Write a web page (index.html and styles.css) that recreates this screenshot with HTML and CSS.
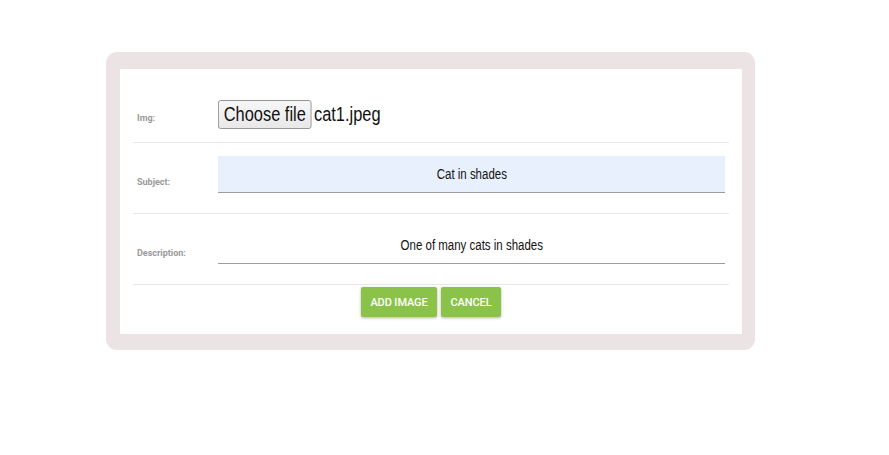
FILE: index.html
```html
<!DOCTYPE html>
<html>
<head>
<meta charset="utf-8">
<link rel="stylesheet" href="styles.css">
</head>
<body>
<div class="frame">
  <form class="card">
    <div class="row row-file">
      <label class="label">Img:</label>
      <div class="control">
        <div class="file-control">
          <button type="button" class="file-btn">Choose file</button>
          <span class="file-name">cat1.jpeg</span>
        </div>
      </div>
    </div>
    <div class="row">
      <label class="label">Subject:</label>
      <div class="control">
        <div class="input filled"><span class="narrow">Cat in shades</span></div>
      </div>
    </div>
    <div class="row">
      <label class="label">Description:</label>
      <div class="control">
        <div class="input"><span class="narrow">One of many cats in shades</span></div>
      </div>
    </div>
    <div class="actions">
      <button type="button" class="btn btn-add">Add image</button>
      <button type="button" class="btn btn-cancel">Cancel</button>
    </div>
  </form>
</div>
</body>
</html>
```
FILE: styles.css
```css
html, body {
  margin: 0;
  padding: 0;
  background: #ffffff;
}
body {
  font-family: "Liberation Sans", Arial, sans-serif;
}
.frame {
  box-sizing: border-box;
  width: 649px;
  margin: 52px 0 0 106px;
  padding: 17px 13px 16px 14px;
  background: #ece4e4;
  border-radius: 11px;
}
.card {
  display: block;
  background: #ffffff;
  padding: 0 13px 17px;
}
.row {
  display: flex;
  align-items: flex-start;
  padding: 13px 4px 20px;
  border-bottom: 1px solid #e8e8e8;
}
.row-file {
  padding: 31px 4px 13px;
}
.label {
  flex: 0 0 81px;
  font-family: Roboto, "Liberation Sans", sans-serif;
  font-weight: 700;
  font-size: 9px;
  line-height: 11px;
  color: #9a9a9a;
  margin-top: 21px;
}
.row-file .label {
  margin-top: 13px;
}
.control {
  flex: 1;
}
.file-control {
  display: flex;
  align-items: center;
  height: 29px;
  transform: scaleX(0.82);
  transform-origin: left center;
}
.file-btn {
  box-sizing: border-box;
  height: 29px;
  padding: 0 6px;
  font-family: "Liberation Sans", sans-serif;
  font-size: 20px;
  color: #111;
  background: linear-gradient(#f7f7f7, #e8e8e8);
  border: 1px solid #8c8c8c;
  border-radius: 3px;
  margin-right: 3px;
}
.file-name {
  font-size: 20px;
  color: #111;
}
.input {
  box-sizing: border-box;
  height: 37px;
  line-height: 36px;
  text-align: center;
  font-size: 14px;
  color: #111;
  border-bottom: 1px solid #9e9e9e;
}
.input.filled {
  background: #e8f0fe;
}
.narrow {
  display: inline-block;
  transform: scaleX(0.82);
  transform-origin: center center;
}
.actions {
  display: flex;
  justify-content: center;
  gap: 4px;
  padding-top: 2px;
}
.btn {
  height: 30px;
  padding: 0;
  border: none;
  border-radius: 2px;
  background: #8bc34a;
  color: #ffffff;
  font-family: Roboto, "Liberation Sans", sans-serif;
  font-weight: 500;
  font-size: 11px;
  letter-spacing: -0.1px;
  text-transform: uppercase;
  box-shadow: 0 1px 3px rgba(0, 0, 0, 0.3);
}
.btn-add {
  width: 76px;
}
.btn-cancel {
  width: 60px;
}
```
